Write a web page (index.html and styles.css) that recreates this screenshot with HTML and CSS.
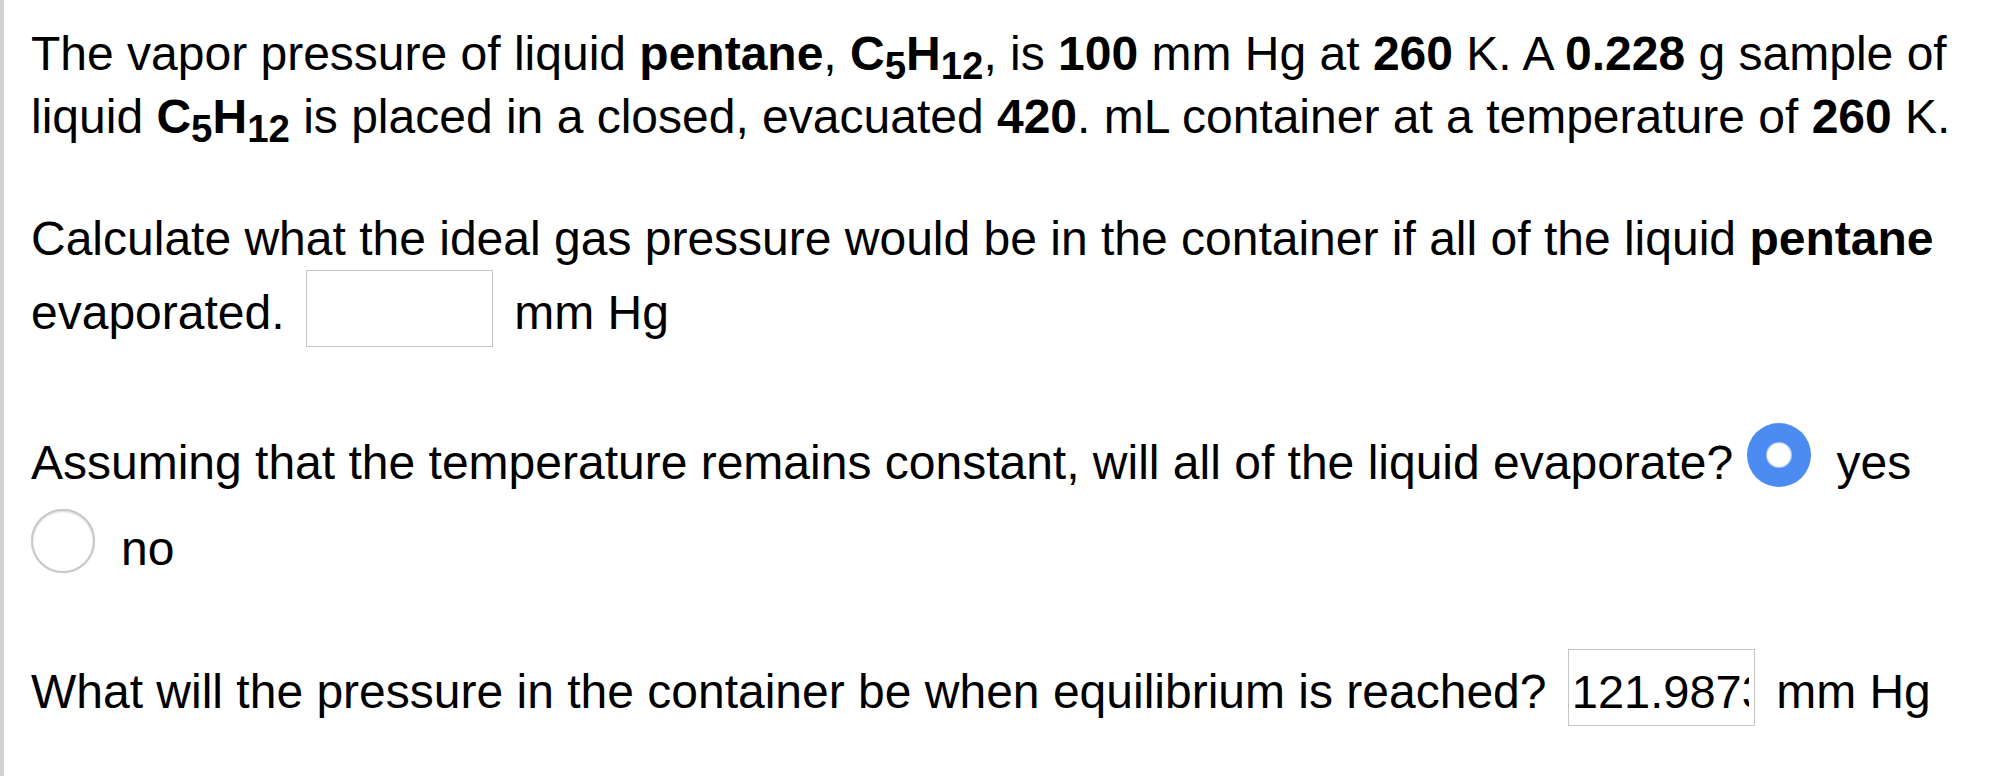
FILE: index.html
```html
<!DOCTYPE html>
<html lang="en">
<head>
<meta charset="utf-8">
<title>Vapor pressure question</title>
<link rel="stylesheet" href="styles.css">
</head>
<body>
<main class="page">
  <p class="para intro">The vapor pressure of liquid <b>pentane</b>, <b>C<sub>5</sub>H<sub>12</sub></b>, is <b>100</b> mm Hg at <b>260</b> K. A <b>0.228</b> g sample of<br>liquid <b>C<sub>5</sub>H<sub>12</sub></b> is placed in a closed, evacuated <b>420</b>. mL container at a temperature of <b>260</b> K.</p>
  <p class="para calc">Calculate what the ideal gas pressure would be in the container if all of the liquid <b>pentane</b><br>evaporated. <input class="answer" type="text" value="" aria-label="ideal gas pressure"> mm Hg</p>
  <p class="para choice">Assuming that the temperature remains constant, will all of the liquid evaporate? <label class="opt"><input class="radio" type="radio" name="evap" checked>yes</label><br><label class="opt"><input class="radio" type="radio" name="evap">no</label></p>
  <p class="para equil">What will the pressure in the container be when equilibrium is reached? <input class="answer" type="text" value="121.98731" aria-label="equilibrium pressure"> mm Hg</p>
</main>
</body>
</html>
```
FILE: styles.css
```css
html, body {
  margin: 0;
  padding: 0;
  background: #fff;
}

.page {
  box-sizing: border-box;
  min-height: 776px;
  border-left: 4px solid #d2d2d2;
  padding: 22px 0 0 27px;
  font-family: "Liberation Sans", Arial, Helvetica, sans-serif;
  font-size: 48px;
  color: #000;
  white-space: nowrap;
}

.para {
  margin: 0;
  line-height: 63px;
}

.para b {
  font-weight: bold;
}

.para sub {
  font-size: 0.8em;
  line-height: 0;
  vertical-align: -9px;
}

.calc {
  margin-top: 59px;
}

.choice {
  margin-top: 73px;
  line-height: 86px;
}

.equil {
  margin-top: 57px;
}

.answer {
  box-sizing: border-box;
  width: 187px;
  height: 77px;
  margin: 0 8px 0 8px;
  padding: 8px 5px 0 3px;
  border: 1px solid #c4c4c4;
  border-radius: 0;
  background: #fff;
  font-family: "Liberation Sans", Arial, Helvetica, sans-serif;
  font-size: 47px;
  color: #000;
  outline: none;
}

.opt {
  white-space: nowrap;
}

.radio {
  appearance: none;
  -webkit-appearance: none;
  box-sizing: border-box;
  width: 64px;
  height: 64px;
  margin: 0 26px 0 0;
  border-radius: 50%;
  vertical-align: -8px;
  border: 2px solid #c8c8c8;
  background: #fff;
  box-shadow: inset 0 1px 2px rgba(0, 0, 0, 0.14), 0 0 1px rgba(0, 0, 0, 0.18);
}

.radio:checked {
  border: none;
  background: radial-gradient(circle at 50% 50%, #ffffff 0 11px, #d6e3fa 12px, #4c8bf2 13.5px);
  box-shadow: none;
}
```
